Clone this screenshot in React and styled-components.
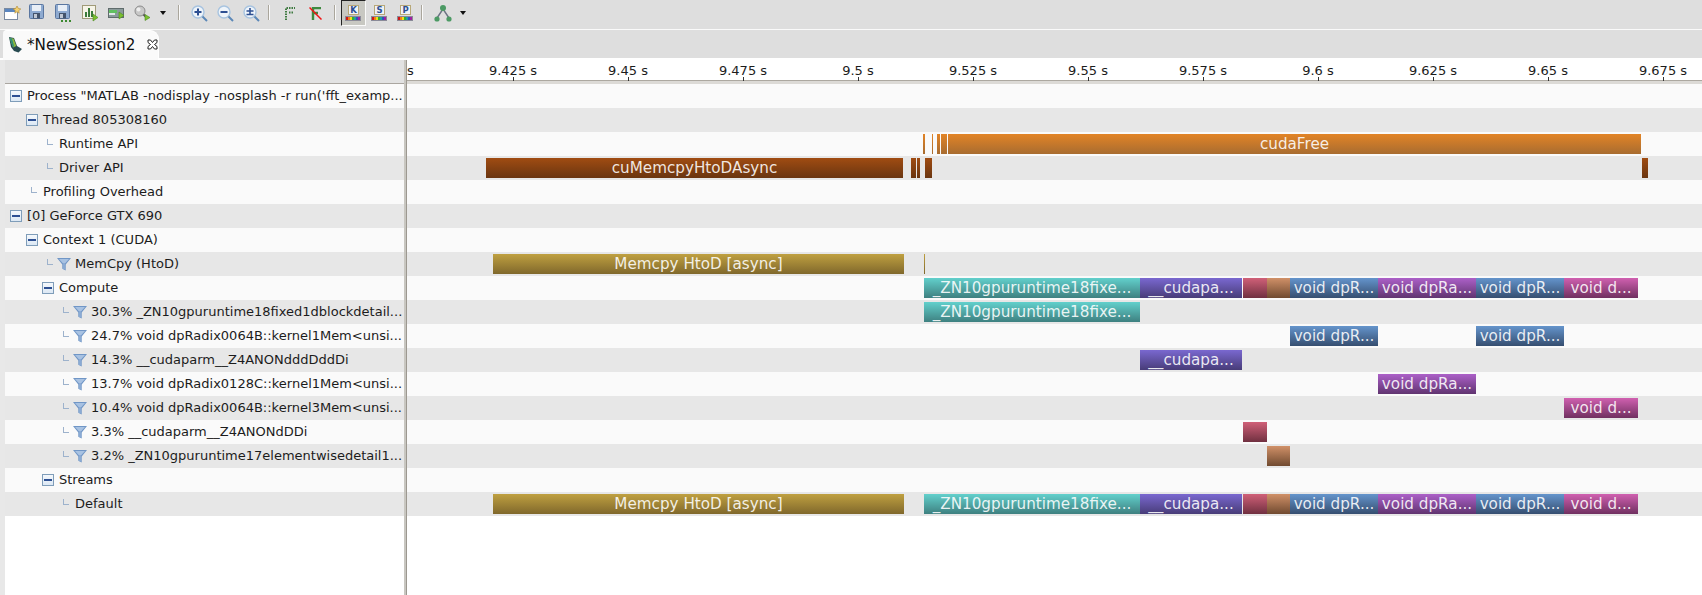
import React from "react";
import styled, { createGlobalStyle } from "styled-components";

const GlobalStyle = createGlobalStyle`
  html, body { margin: 0; padding: 0; background: #fff; }
  body { font-family: "DejaVu Sans", sans-serif; font-size: 13px; color: #1c1c1c; overflow: hidden; }
`;

const ROW_COLORS = ["#fafafa", "#e7e7e7"];
const TICK_START = 398 - 407;
const TICK_STEP = 115;

const tickLabels = [
  "9.4 s", "9.425 s", "9.45 s", "9.475 s", "9.5 s", "9.525 s", "9.55 s",
  "9.575 s", "9.6 s", "9.625 s", "9.65 s", "9.675 s",
];

const colors = {
  runtime: ["#e28426", "#a86c30"],
  driver: ["#a04c12", "#6a3510"],
  memcpy: ["#bfa040", "#80682c"],
  teal: ["#62d0cc", "#3e8080"],
  indigo: ["#7a68d0", "#483c78"],
  red: ["#d06078", "#703040"],
  brown: ["#d09068", "#704a30"],
  blue: ["#6494cc", "#364e70"],
  purple: ["#ac60c8", "#603470"],
  pink: ["#d060b0", "#703060"],
};

const computeBars = [
  [924, 1140, "teal", "_ZN10gpuruntime18fixe..."],
  [1140, 1242, "indigo", "__cudapa..."],
  [1243, 1267, "red"],
  [1267, 1290, "brown"],
  [1290, 1378, "blue", "void dpR..."],
  [1378, 1476, "purple", "void dpRa..."],
  [1476, 1564, "blue", "void dpR..."],
  [1564, 1638, "pink", "void d..."],
];

const rows = [
  { level: 0, open: true, text: "Process \"MATLAB -nodisplay -nosplash -r run('fft_examp..." },
  { level: 1, open: true, text: "Thread 805308160" },
  {
    level: 2, text: "Runtime API",
    bars: [
      [923, 925, "runtime"], [932, 933, "runtime"], [937, 940, "runtime"],
      [941, 947, "runtime"], [948, 1641, "runtime", "cudaFree"],
    ],
  },
  {
    level: 2, text: "Driver API",
    bars: [
      [486, 903, "driver", "cuMemcpyHtoDAsync"], [911, 916, "driver"],
      [917, 920, "driver"], [925, 932, "driver"], [1642, 1648, "driver"],
    ],
  },
  { level: 1, text: "Profiling Overhead" },
  { level: 0, open: true, text: "[0] GeForce GTX 690" },
  { level: 1, open: true, text: "Context 1 (CUDA)" },
  {
    level: 2, filter: true, text: "MemCpy (HtoD)",
    bars: [[493, 904, "memcpy", "Memcpy HtoD [async]"], [924, 925, "memcpy"]],
  },
  { level: 2, open: true, text: "Compute", bars: computeBars },
  { level: 3, filter: true, text: "30.3% _ZN10gpuruntime18fixed1dblockdetail...", bars: [computeBars[0]] },
  { level: 3, filter: true, text: "24.7% void dpRadix0064B::kernel1Mem<unsi...", bars: [computeBars[4], computeBars[6]] },
  { level: 3, filter: true, text: "14.3% __cudaparm__Z4ANONdddDddDi", bars: [computeBars[1]] },
  { level: 3, filter: true, text: "13.7% void dpRadix0128C::kernel1Mem<unsi...", bars: [computeBars[5]] },
  { level: 3, filter: true, text: "10.4% void dpRadix0064B::kernel3Mem<unsi...", bars: [computeBars[7]] },
  { level: 3, filter: true, text: "3.3% __cudaparm__Z4ANONdDDi", bars: [computeBars[2]] },
  { level: 3, filter: true, text: "3.2% _ZN10gpuruntime17elementwisedetail1...", bars: [computeBars[3]] },
  { level: 2, open: true, text: "Streams" },
  {
    level: 3, text: "Default",
    bars: [[493, 904, "memcpy", "Memcpy HtoD [async]"], ...computeBars],
  },
];

const Page = styled.div`
  width: 1702px;
  height: 595px;
  display: flex;
  flex-direction: column;
  overflow: hidden;
  background: #dedede;
`;

const Toolbar = styled.div`
  height: 29px;
  display: flex;
  align-items: flex-start;
  background: #dedede;
  border-bottom: 1px solid #fafafa;
  flex: none;
`;

const ToolButton = styled.div`
  width: ${(p) => p.$w || 24}px;
  height: 26px;
  margin-left: ${(p) => p.$ml || 0}px;
  display: flex;
  align-items: center;
  justify-content: center;
  flex: none;
  box-sizing: border-box;
  ${(p) => p.$active && `
    background: #c8c8c2;
    border-top: 1px solid #222;
    border-left: 1px solid #222;
    border-right: 1px solid #fafafa;
    border-bottom: 1px solid #fafafa;
  `}
`;

const ToolSep = styled.div`
  width: 2px;
  height: 15px;
  margin: 5px 0 0 ${(p) => p.$ml}px;
  background: linear-gradient(90deg, #aaa69c 50%, #fafafa 50%);
  flex: none;
`;

const TabBar = styled.div`
  height: 30px;
  flex: none;
  display: flex;
  align-items: flex-end;
  padding-left: 3px;
  background: #dedede;
  box-shadow: inset 0 -2px 0 #fff;
`;

const Tab = styled.div`
  width: 156px;
  height: 30px;
  box-sizing: border-box;
  display: flex;
  align-items: center;
  padding: 0 0 2px 5px;
  gap: 4px;
  background: #fafafa;
  border-top: 1px solid #fff;
  border-right: 1px solid #fff;
  border-radius: 4px 9px 0 0;
  font-size: 15.2px;
  color: #111;
  white-space: nowrap;
`;

const TabIcon = styled.svg`
  flex: none;
`;

const TabClose = styled.svg`
  margin-left: 8px;
  flex: none;
`;

const Workspace = styled.div`
  flex: 1;
  display: flex;
  background: #fff;
  border-left: 5px solid #e8e8e8;
  min-height: 0;
`;

const TreePane = styled.div`
  width: 399px;
  flex: none;
  display: flex;
  flex-direction: column;
  background: #fff;
`;

const Sash = styled.div`
  width: 3px;
  flex: none;
  background: linear-gradient(90deg, #c8c6c0 0 66%, #9c9890 66%);
`;

const TimelinePane = styled.div`
  flex: 1;
  display: flex;
  flex-direction: column;
  min-width: 0;
  background: #fff;
`;

const TreeHeader = styled.div`
  height: 24px;
  flex: none;
  background: #e2e2e2;
  box-sizing: border-box;
  border-bottom: 1px solid #aaa6a0;
`;

const Ruler = styled.div`
  height: 24px;
  flex: none;
  position: relative;
  overflow: hidden;
  background: #fff;
  box-sizing: border-box;
  border-bottom: 3px solid #dcdad6;
  box-shadow: inset 0 -1px 0 #aca8a0;
`;

const TickLabel = styled.span`
  position: absolute;
  top: 3px;
  transform: translateX(-50%);
  white-space: nowrap;
  font-size: 13px;
  line-height: 15px;
  color: #1c1c1c;
`;

const TickMark = styled.i`
  position: absolute;
  bottom: 0;
  width: 1px;
  height: 4px;
  background: #333;
`;

const Row = styled.div`
  height: 24px;
  flex: none;
  background: ${(p) => ROW_COLORS[p.$index % 2]};
`;

const TreeRow = styled(Row)`
  display: flex;
  align-items: center;
  padding-left: ${(p) => 6 + p.$level * 16}px;
  white-space: nowrap;
  overflow: hidden;
  line-height: 24px;
`;

const TimelineRow = styled(Row)`
  position: relative;
`;

const Expander = styled.span`
  width: 12px;
  height: 12px;
  box-sizing: border-box;
  flex: none;
  margin: 0 5px 0 -1px;
  border: 1px solid #7f9db9;
  background: linear-gradient(180deg, #f4f8fc, #dce8f4);
  display: flex;
  align-items: center;
  justify-content: center;
  &::before {
    content: "";
    width: 8px;
    height: 2px;
    background: #2d4f92;
  }
`;

const Connector = styled.span`
  width: 11px;
  height: 12px;
  box-sizing: border-box;
  flex: none;
  margin-right: 5px;
  position: relative;
  &::before {
    content: "";
    position: absolute;
    left: 4px;
    top: 1px;
    width: 6px;
    height: 6px;
    border-left: 1px solid #9db2cc;
    border-bottom: 1px solid #9db2cc;
    box-sizing: border-box;
  }
`;

const Funnel = styled.svg`
  flex: none;
  margin: 0 4px 0 -2px;
`;

const Bar = styled.div`
  position: absolute;
  top: 2px;
  height: 20px;
  overflow: hidden;
  display: flex;
  align-items: center;
  justify-content: center;
  white-space: nowrap;
  font-size: 15.2px;
  line-height: 20px;
  color: rgba(255, 255, 255, 0.88);
  background: linear-gradient(180deg, ${(p) => colors[p.$color][0]}, ${(p) => colors[p.$color][1]});
`;

const FunnelIcon = () => (
  <Funnel width="14" height="14" viewBox="0 0 14 14">
    <path d="M0 1h14L8.7 7.5V13.5L5.3 11.8V7.5z" fill="#7096c6" />
    <path d="M2 2h10L8 6.5H6z" fill="#a8c2e2" />
    <path d="M6.3 7h1.4v5.2H6.3z" fill="#96b4da" />
  </Funnel>
);

const NewIcon = () => (
  <svg width="17" height="14" viewBox="0 0 17 14">
    <rect x="0.5" y="2.5" width="13" height="11" fill="#fff" stroke="#7a8aa0" />
    <rect x="1" y="3" width="12" height="3" fill="#5a86c0" />
    <path d="M13 0l1.2 2.3L16.8 3l-2.1 1.6.5 2.6L13 5.8l-2.2 1.4.5-2.6L9.2 3l2.6-.7z" fill="#f4d070" stroke="#b08a30" strokeWidth=".6" />
  </svg>
);

const SaveIcon = ({ dots }) => (
  <svg width="19" height="18" viewBox="0 0 19 18">
    <rect x="0.5" y="0.5" width="14" height="14" rx="1" fill="#8eaad0" stroke="#5a76a0" />
    <rect x="3" y="1" width="9" height="6" fill="#e8eef6" />
    <rect x="4" y="9" width="7" height="5.5" fill="#44546c" />
    <rect x="5" y="10" width="3" height="4" fill="#c0c8d4" />
    {dots && <path d="M6 17h2M10 17h2M14 17h2" stroke="#3c8a30" strokeWidth="2" />}
  </svg>
);

const ChartIcon = () => (
  <svg width="17" height="17" viewBox="0 0 17 17">
    <rect x="0.5" y="0.5" width="13" height="13" fill="#f6f4e8" stroke="#a09a78" />
    <path d="M3 7h2v5H3zM6 3h2v9H6zM9 6h2v6H9z" fill="#3a7a3a" />
    <path d="M11 9l5 3.5-5 3.5z" fill="#7cc030" stroke="#4a8a20" strokeWidth=".6" />
  </svg>
);

const BarRunIcon = () => (
  <svg width="17" height="13" viewBox="0 0 17 13">
    <rect x="0.5" y="1.5" width="15" height="9" fill="#8a9a9a" stroke="#606c6c" />
    <rect x="1" y="3" width="8" height="3" fill="#60c060" />
    <rect x="1" y="6" width="6" height="2" fill="#e0e8e8" />
    <path d="M11 5l5 3.5-5 3.5z" fill="#7cc030" stroke="#4a8a20" strokeWidth=".6" />
  </svg>
);

const SearchRunIcon = () => (
  <svg width="17" height="16" viewBox="0 0 17 16">
    <circle cx="6" cy="6" r="5" fill="#c8c8c8" stroke="#8c8c8c" />
    <circle cx="4.5" cy="4.5" r="2" fill="#eee" />
    <path d="M9.5 9.5l2 2" stroke="#555" strokeWidth="2" />
    <path d="M11 9.5l5 3-5 3z" fill="#7cc030" stroke="#4a8a20" strokeWidth=".6" />
  </svg>
);

const Caret = () => (
  <svg width="6" height="4" viewBox="0 0 6 4">
    <path d="M0 0h6L3 4z" fill="#111" />
  </svg>
);

const ZoomIcon = ({ kind }) => (
  <svg width="17" height="17" viewBox="0 0 17 17">
    <circle cx="7" cy="7" r="6" fill="#eef4fa" stroke="#a8c4e0" strokeWidth="1.4" />
    <path d="M11.5 11.5L16 16" stroke="#5c88b8" strokeWidth="2" />
    {kind === "in" && <path d="M3.5 7h7M7 3.5v7" stroke="#2d4f92" strokeWidth="2" />}
    {kind === "out" && <path d="M3.5 7h7" stroke="#2d4f92" strokeWidth="2" />}
    {kind === "fit" && <path d="M3.5 9.5h7M3.5 6h7M7 3v6" stroke="#2d4f92" strokeWidth="1.6" />}
  </svg>
);

const FlagDashed = () => (
  <svg width="11" height="13" viewBox="0 0 11 13">
    <path d="M1 13V1h9M4 5.5h5" stroke="#3e7a40" strokeWidth="2" strokeDasharray="1.5 1" fill="none" />
  </svg>
);

const FlagCrossed = () => (
  <svg width="13" height="13" viewBox="0 0 13 13">
    <path d="M4 13V1h8M4 6h5" stroke="#3e8a40" strokeWidth="2.4" fill="none" />
    <path d="M0.5 0.5L12.5 12.5" stroke="#f01414" strokeWidth="1.5" />
  </svg>
);

const PaletteIcon = ({ letter }) => {
  const swatch = ["#d01818", "#f08018", "#f0e018", "#30b030", "#20a0a0", "#3050c0", "#a020a0"];
  return (
    <svg width="17" height="16" viewBox="0 0 17 16">
      <rect x="3.5" y="0.5" width="10" height="9" fill="#eef2f8" stroke="#b8a878" />
      <text x="8.5" y="8" fontSize="8.5" fontWeight="700" textAnchor="middle" fill="#2d4f92" fontFamily="DejaVu Sans, sans-serif">{letter}</text>
      <rect x="0" y="11" width="16" height="5" fill="#8a8a98" />
      {swatch.map((c, i) => (
        <rect key={c} x={1 + i * 2} y="12" width="2" height="3" fill={c} />
      ))}
    </svg>
  );
};

const TreeIcon = () => (
  <svg width="18" height="17" viewBox="0 0 18 17">
    <path d="M9 4L3 13M9 4l6 9" stroke="#6c7484" strokeWidth="1.4" fill="none" />
    <circle cx="9" cy="3" r="3" fill="#4c9a64" />
    <circle cx="3" cy="14" r="2.6" fill="#4c9a64" />
    <circle cx="15" cy="14" r="2.6" fill="#4c9a64" />
  </svg>
);

const SessionIcon = () => (
  <TabIcon width="15" height="16" viewBox="0 0 15 16">
    <path d="M1 0l5 1 3 8 5 3-3.5 3.5L6 14 3 10z" fill="#274a50" />
    <path d="M1.5 1l4 .6L8.3 9 5 10.5z" fill="#8ab83c" />
    <path d="M1.5 1l2.5.4L6 9 5 10.5z" fill="#2f8f78" />
  </TabIcon>
);

const TreeCell = ({ row, index }) => (
  <TreeRow $index={index} $level={row.level}>
    {row.open ? <Expander /> : <Connector />}
    {row.filter && <FunnelIcon />}
    <span>{row.text}</span>
  </TreeRow>
);

const TimelineCell = ({ row, index }) => (
  <TimelineRow $index={index}>
    {(row.bars || []).map(([x0, x1, color, label]) => (
      <Bar key={x0} $color={color} style={{ left: x0 - 407, width: x1 - x0 }}>
        {label}
      </Bar>
    ))}
  </TimelineRow>
);

export default function App() {
  return (
    <Page>
      <GlobalStyle />
      <Toolbar>
        <ToolButton><NewIcon /></ToolButton>
        <ToolButton $ml={2}><SaveIcon /></ToolButton>
        <ToolButton $ml={2}><SaveIcon dots /></ToolButton>
        <ToolButton $ml={2}><ChartIcon /></ToolButton>
        <ToolButton $ml={2}><BarRunIcon /></ToolButton>
        <ToolButton $ml={2}><SearchRunIcon /></ToolButton>
        <ToolButton $w={8} $ml={5}><Caret /></ToolButton>
        <ToolSep $ml={11} />
        <ToolButton $ml={7}><ZoomIcon kind="in" /></ToolButton>
        <ToolButton $ml={2}><ZoomIcon kind="out" /></ToolButton>
        <ToolButton $ml={2}><ZoomIcon kind="fit" /></ToolButton>
        <ToolSep $ml={5} />
        <ToolButton $ml={8}><FlagDashed /></ToolButton>
        <ToolButton $ml={1}><FlagCrossed /></ToolButton>
        <ToolSep $ml={7} />
        <ToolButton $w={25} $ml={5} $active><PaletteIcon letter="K" /></ToolButton>
        <ToolButton $ml={1}><PaletteIcon letter="S" /></ToolButton>
        <ToolButton $ml={2}><PaletteIcon letter="P" /></ToolButton>
        <ToolSep $ml={4} />
        <ToolButton $ml={8}><TreeIcon /></ToolButton>
        <ToolButton $w={8} $ml={4}><Caret /></ToolButton>
      </Toolbar>
      <TabBar>
        <Tab>
          <SessionIcon />
          <span>*NewSession2</span>
          <TabClose width="11" height="11" viewBox="0 0 11 11">
            <path d="M1 1h2.5L5.5 3.5 7.5 1H10v2.5L7.5 5.5 10 7.5V10H7.5L5.5 7.5 3.5 10H1V7.5l2.5-2L1 3.5z" fill="#fff" stroke="#222" strokeWidth="1" />
          </TabClose>
        </Tab>
      </TabBar>
      <Workspace>
        <TreePane>
          <TreeHeader />
          {rows.map((row, i) => (
            <TreeCell key={row.text} row={row} index={i} />
          ))}
        </TreePane>
        <Sash />
        <TimelinePane>
          <Ruler>
            {tickLabels.map((label, i) => (
              <React.Fragment key={label}>
                <TickLabel style={{ left: TICK_START + i * TICK_STEP }}>{label}</TickLabel>
                <TickMark style={{ left: TICK_START + i * TICK_STEP }} />
              </React.Fragment>
            ))}
          </Ruler>
          {rows.map((row, i) => (
            <TimelineCell key={row.text} row={row} index={i} />
          ))}
        </TimelinePane>
      </Workspace>
    </Page>
  );
}
